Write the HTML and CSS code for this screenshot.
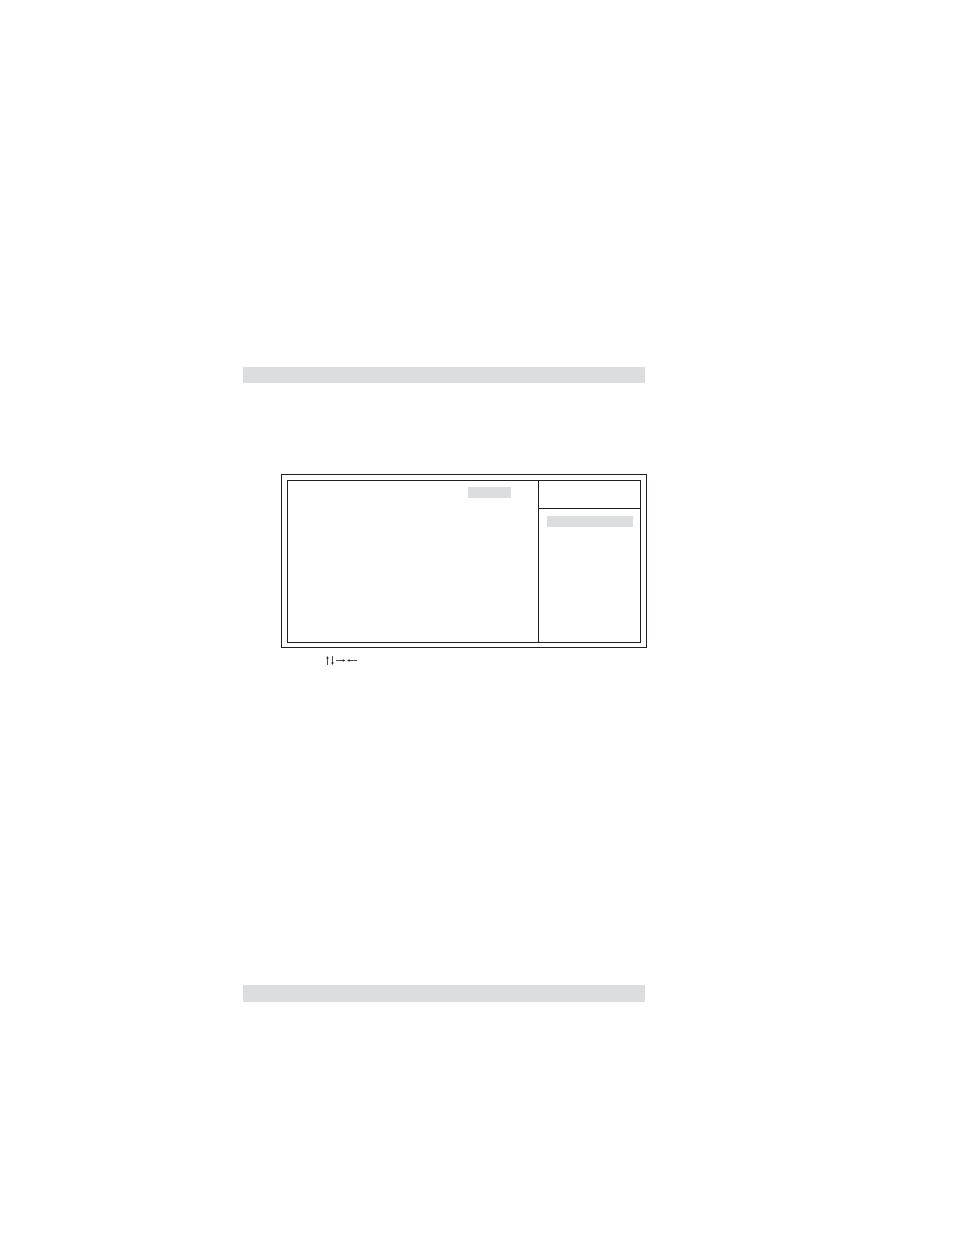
FILE: index.html
```html
<!DOCTYPE html>
<html lang="en">
<head>
    <meta charset="UTF-8">
    <meta name="viewport" content="width=device-width, initial-scale=1.0">
    <title>Setup Menu</title>
    <link rel="stylesheet" href="styles.css">
</head>
<body>

    <main class="page">
        <div class="band"></div>

        <section class="screen">
            <div class="frame">
                <div class="options">
                    <div class="selected-value"></div>
                </div>
                <div class="side">
                    <div class="side-title"></div>
                    <div class="side-help">
                        <div class="selected-item"></div>
                    </div>
                </div>
            </div>
        </section>

        <div class="keys">
            <svg class="arrow" width="5" height="10" viewBox="0 0 5 10">
                <path class="line" d="M2.5 1V9"/>
                <path d="M2.5 0L3.8 2.6H1.2z"/>
            </svg>
            <svg class="arrow" width="5" height="10" viewBox="0 0 5 10">
                <path class="line" d="M2.5 0V8"/>
                <path d="M2.5 9L3.8 6.4H1.2z"/>
            </svg>
            <svg class="arrow" width="11" height="10" viewBox="0 0 11 10">
                <path class="line" d="M1 4.5H9.5"/>
                <path d="M10.4 4.5L7.8 3.2V5.8z"/>
            </svg>
            <svg class="arrow" width="11" height="10" viewBox="0 0 11 10">
                <path class="line" d="M2 4.5H11"/>
                <path d="M1 4.5L3.6 3.2V5.8z"/>
            </svg>
        </div>

        <div class="band band-bottom"></div>
    </main>

</body>
</html>
```

FILE: styles.css
```css
* {
    box-sizing: border-box;
}

body {
    margin: 0;
    background-color: white;
    color: #231f20;
    font-family: "Liberation Serif", "Times New Roman", serif;
}

.page {
    padding: 367px 307px 233px 243px;
}

.band {
    height: 16px;
    margin-right: 2px;
    background-color: #dcddde;
}

.band-bottom {
    height: 17px;
}

/* double border around the setup screen */
.screen {
    margin-top: 91px;
    margin-left: 38px;
    padding: 5px 5px 4px;
    border: 1px solid #231f20;
}

.frame {
    display: flex;
    min-height: 163px;
    border: 1px solid #231f20;
}

.options {
    display: flex;
    flex: 1;
    justify-content: flex-end;
    padding: 6px 27px;
}

.selected-value {
    width: 43px;
    height: 11px;
    background-color: #dcddde;
}

.side {
    width: 102px;
    border-left: 1px solid #231f20;
}

.side-title {
    height: 28px;
    border-bottom: 1px solid #231f20;
}

.side-help {
    padding: 7px 7px 7px 8px;
}

.selected-item {
    height: 11px;
    background-color: #dcddde;
}

/* up, down, right and left cursor keys */
.keys {
    display: flex;
    margin: 8px 0 319px 82px;
}

.arrow {
    display: block;
    fill: #231f20;
}

.line {
    fill: none;
    stroke: #231f20;
    stroke-opacity: 0.8;
}
```
